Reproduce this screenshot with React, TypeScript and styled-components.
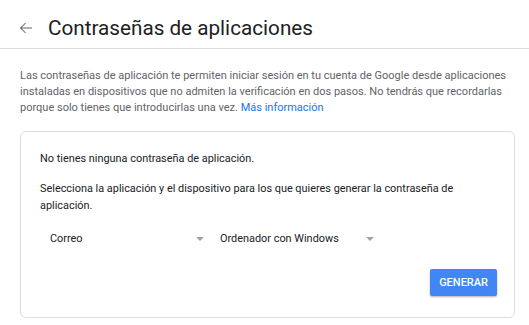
import React from 'react';
import styled, { createGlobalStyle } from 'styled-components';

const GlobalStyle = createGlobalStyle`
  body {
    margin: 0;
    background: #fff;
    font-family: Roboto, "Liberation Sans", Arial, sans-serif;
    -webkit-font-smoothing: antialiased;
  }
`;

const Header = styled.header`
  box-sizing: border-box;
  display: flex;
  align-items: center;
  height: 49px;
  padding: 8px 0 0 17px;
  border-bottom: 1px solid #dadce0;
`;

const BackButton = styled.button`
  display: flex;
  align-items: center;
  justify-content: center;
  width: 18px;
  height: 18px;
  padding: 0;
  border: 0;
  background: none;
  color: #5f6368;
  cursor: pointer;
`;

const Title = styled.h1`
  margin: 0 0 0 13px;
  font-size: 20.7px;
  font-weight: 400;
  color: #202124;
`;

const Main = styled.main`
  padding: 19px 14px 0 20px;
`;

const Intro = styled.p`
  margin: 0;
  font-size: 11px;
  line-height: 16px;
  color: #5f6368;
`;

const Link = styled.a`
  color: #1a73e8;
  text-decoration: none;
`;

const Card = styled.section`
  margin-top: 15px;
  border: 1px solid #dadce0;
  border-radius: 6px;
  padding: 18px 17px 21px 19px;
`;

const Text = styled.p<{ $gap?: number }>`
  margin: 0 0 ${(p) => p.$gap ?? 0}px;
  font-size: 10.9px;
  line-height: 17.5px;
  color: #202124;
`;

const SelectRow = styled.div`
  display: flex;
  gap: 10px;
  padding-left: 6px;
  margin: 8px 0 14px;
`;

const Select = styled.div`
  display: flex;
  align-items: center;
  justify-content: space-between;
  width: 160px;
  height: 32px;
  padding: 0 2px 0 4px;
  box-sizing: border-box;
  font-size: 10.9px;
  color: #202124;
  cursor: pointer;
`;

const Caret = styled.span`
  width: 0;
  height: 0;
  border-left: 4px solid transparent;
  border-right: 4px solid transparent;
  border-top: 4px solid #a3a3a3;
`;

const Actions = styled.div`
  display: flex;
  justify-content: flex-end;
`;

const PrimaryButton = styled.button`
  min-width: 66px;
  height: 27px;
  padding: 0 9px;
  border: 0;
  border-radius: 2px;
  background: #4285f4;
  color: #fff;
  font-family: inherit;
  font-size: 11px;
  font-weight: 500;
  text-transform: uppercase;
  box-shadow: 0 1px 2px rgba(0, 0, 0, 0.3);
  cursor: pointer;
`;

const ArrowBack = () => (
  <svg width="18" height="18" viewBox="0 0 24 24" fill="currentColor">
    <path d="M20 11.4H6.3l5.6-5.6-.9-.9L3.9 12l7.1 7.1.9-.9-5.6-5.6H20v-1.2z" />
  </svg>
);

const App: React.FC = () => (
  <>
    <GlobalStyle />
    <Header>
      <BackButton aria-label="Atrás">
        <ArrowBack />
      </BackButton>
      <Title>Contraseñas de aplicaciones</Title>
    </Header>
    <Main>
      <Intro>
        Las contraseñas de aplicación te permiten iniciar sesión en tu cuenta de Google desde aplicaciones
        instaladas en dispositivos que no admiten la verificación en dos pasos. No tendrás que recordarlas
        porque solo tienes que introducirlas una vez. <Link href="#">Más información</Link>
      </Intro>
      <Card>
        <Text $gap={12}>No tienes ninguna contraseña de aplicación.</Text>
        <Text>
          Selecciona la aplicación y el dispositivo para los que quieres generar la contraseña de aplicación.
        </Text>
        <SelectRow>
          <Select>
            Correo
            <Caret />
          </Select>
          <Select>
            Ordenador con Windows
            <Caret />
          </Select>
        </SelectRow>
        <Actions>
          <PrimaryButton>Generar</PrimaryButton>
        </Actions>
      </Card>
    </Main>
  </>
);

export default App;
